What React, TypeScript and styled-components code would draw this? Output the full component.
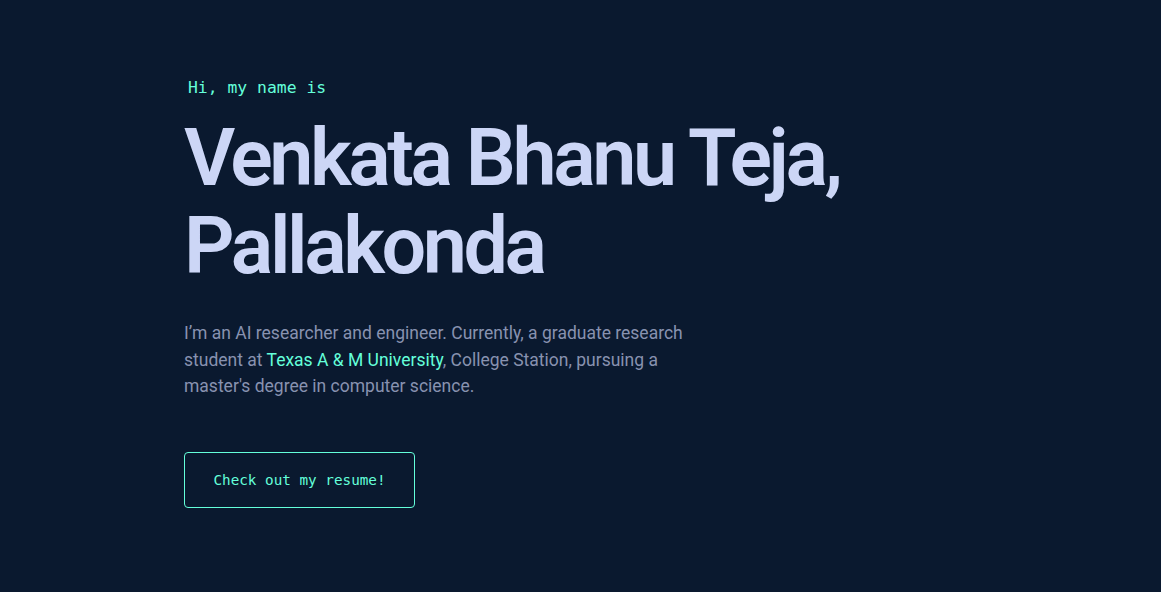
import styled, { createGlobalStyle } from "styled-components";

const colors = {
  navy: "#0a192f",
  green: "#64ffda",
  lightestSlate: "#ccd6f6",
  slate: "#8892b0",
};

const sans = `Roboto, Inter, "Liberation Sans", sans-serif`;
const mono = `"DejaVu Sans Mono", "Liberation Mono", monospace`;

const GlobalStyle = createGlobalStyle`
  html, body {
    margin: 0;
    padding: 0;
    background: ${colors.navy};
  }
  body {
    font-family: ${sans};
    color: ${colors.slate};
    -webkit-font-smoothing: antialiased;
  }
`;

export default function App() {
  return (
    <>
      <GlobalStyle />
      <Main>
        <Hero>
          <Greeting>Hi, my name is</Greeting>
          <BigHeading>
            Venkata Bhanu Teja,
            <br />
            Pallakonda
          </BigHeading>
          <Intro>
            I’m an AI researcher and engineer. Currently, a graduate research
            student at <InlineLink href="#">Texas A &amp; M University</InlineLink>,
            College Station, pursuing a master's degree in computer science.
          </Intro>
          <ResumeButton href="#">Check out my resume!</ResumeButton>
        </Hero>
      </Main>
    </>
  );
}

const Main = styled.main`
  box-sizing: border-box;
  min-height: 592px;
  padding: 0 184px;
  background: ${colors.navy};
`;

const Hero = styled.section`
  display: flex;
  flex-direction: column;
  align-items: flex-start;
  padding-top: 78px;
`;

const Greeting = styled.h1`
  margin: 0 0 16px 4px;
  color: ${colors.green};
  font-family: ${mono};
  font-size: 16.4px;
  font-weight: 400;
  line-height: 20px;
`;

const BigHeading = styled.h2`
  margin: 0;
  color: ${colors.lightestSlate};
  font-family: ${sans};
  font-size: 79px;
  font-weight: 600;
  line-height: 88px;
  letter-spacing: -3.4px;
`;

const Intro = styled.p`
  margin: 30px 0 0;
  max-width: 520px;
  font-size: 17.5px;
  line-height: 26.5px;
  color: ${colors.slate};
`;

const InlineLink = styled.a`
  color: ${colors.green};
  text-decoration: none;
`;

const ResumeButton = styled.a`
  box-sizing: border-box;
  display: inline-flex;
  align-items: center;
  justify-content: center;
  width: 231px;
  height: 56px;
  margin-top: 52px;
  border: 1px solid ${colors.green};
  border-radius: 4px;
  color: ${colors.green};
  font-family: ${mono};
  font-size: 14.3px;
  text-decoration: none;
`;
